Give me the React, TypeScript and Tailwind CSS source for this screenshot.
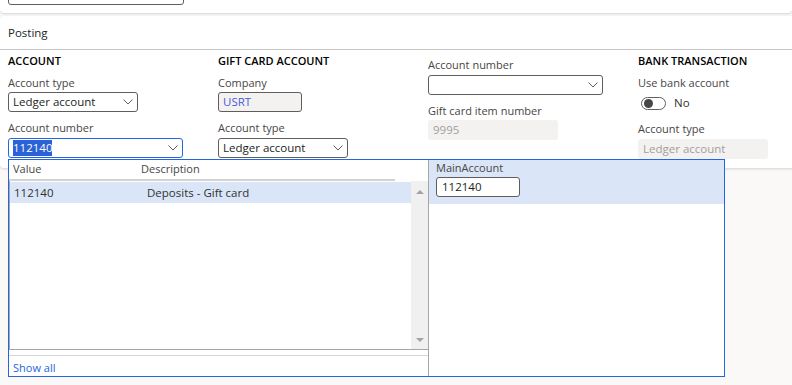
import React from "react";

const F = { fontFamily: '"Segoe UI", "Open Sans", "Noto Sans", sans-serif' };

function Chevron() {
  return (
    <svg width="10" height="6" viewBox="0 0 10 6" className="shrink-0">
      <path d="M0.5 0.5 L5 5 L9.5 0.5" fill="none" stroke="#605e5c" strokeWidth="1" />
    </svg>
  );
}

function Select({ w, children, focus }: { w: string; children?: React.ReactNode; focus?: boolean }) {
  return (
    <div
      className={`${w} h-[20px] rounded-[3px] border ${focus ? "border-[#2266e3]" : "border-[#605e5c]"} bg-white flex items-center pl-[4px] pr-[4px] text-[11.5px] text-[#201f1e]`}
    >
      <div className="flex-1 leading-[16px] truncate">{children}</div>
      <Chevron />
    </div>
  );
}

function Label({ children, className = "" }: { children: React.ReactNode; className?: string }) {
  return <div className={`text-[11px] leading-[16px] text-[#484644] ${className}`}>{children}</div>;
}

function Heading({ children }: { children: React.ReactNode }) {
  return <div className="text-[11px] leading-[16px] font-semibold text-[#000] mt-[3px]">{children}</div>;
}

export default function App() {
  return (
    <div style={F} className="relative w-[792px] h-[385px] overflow-hidden bg-[#faf9f8]">
      {/* top card */}
      <div className="h-[13px] bg-white rounded-b-[4px] shadow-[0_1px_2px_rgba(0,0,0,0.14)] overflow-hidden">
        <div className="ml-[8px] mt-[-15px] w-[176px] h-[20px] rounded-[3px] border border-[#605e5c]" />
      </div>

      {/* posting card */}
      <div className="mt-[3px] w-[810px] h-[152px] bg-white rounded-[4px] shadow-[0_1px_3px_rgba(0,0,0,0.16)]">
        <div className="h-[34px] flex items-center px-[8px] text-[11.5px] text-[#201f1e] border-b border-[#c8c6c4]">
          Posting
        </div>
        <div className="grid grid-cols-[210px_210px_210px_1fr] pl-[8px]">
          {/* col 1 */}
          <div>
            <Heading>ACCOUNT</Heading>
            <Label className="mt-[6px]">Account type</Label>
            <div className="mt-[1px]">
              <Select w="w-[130px]">Ledger account</Select>
            </div>
            <Label className="mt-[8px]">Account number</Label>
            <div className="mt-[2px]">
              <Select w="w-[175px]" focus>
                <span className="bg-[#2b62d8] text-white py-[1px]">112140</span>
              </Select>
            </div>
          </div>
          {/* col 2 */}
          <div>
            <Heading>GIFT CARD ACCOUNT</Heading>
            <Label className="mt-[6px]">Company</Label>
            <div className="mt-[1px] w-[84px] h-[20px] rounded-[3px] border border-[#605e5c] bg-[#f3f2f1] flex items-center pl-[4px] text-[11.5px] text-[#4a5ad8]">
              USRT
            </div>
            <Label className="mt-[8px]">Account type</Label>
            <div className="mt-[2px]">
              <Select w="w-[130px]">Ledger account</Select>
            </div>
          </div>
          {/* col 3 */}
          <div>
            <Label className="mt-[7px]">Account number</Label>
            <div className="mt-[2px]">
              <Select w="w-[175px]" />
            </div>
            <Label className="mt-[8px]">Gift card item number</Label>
            <div className="mt-[1px] w-[130px] h-[20px] rounded-[3px] bg-[#f3f2f1] flex items-center pl-[5px] text-[11.5px] text-[#a19f9d]">
              9995
            </div>
          </div>
          {/* col 4 */}
          <div>
            <Heading>BANK TRANSACTION</Heading>
            <Label className="mt-[6px]">Use bank account</Label>
            <div className="mt-[4px] h-[16px] flex items-center">
              <div className="ml-[3px] w-[25px] h-[13px] rounded-full border border-[#605e5c] flex items-center pl-[2px]">
                <div className="w-[9px] h-[9px] rounded-full bg-[#484644]" />
              </div>
              <span className="ml-[8px] text-[11.5px] text-[#323130]">No</span>
            </div>
            <Label className="mt-[10px]">Account type</Label>
            <div className="mt-[2px] w-[130px] h-[20px] rounded-[3px] bg-[#f3f2f1] flex items-center pl-[5px] text-[11.5px] text-[#a19f9d]">
              Ledger account
            </div>
          </div>
        </div>
      </div>

      {/* lookup dropdown */}
      <div className="absolute left-[8px] top-[159px] w-[717px] h-[218px] border border-[#2266e3] bg-white flex text-[11px]">
        <div className="w-[420px] border-r border-[#a6a6a6] flex flex-col">
          <div className="w-[386px] h-[21px] border-b-2 border-[#d2d2d2] flex items-center text-[#484644]">
            <span className="ml-[4px] w-[128px]">Value</span>
            <span>Description</span>
          </div>
          <div className="h-[170px] border-l border-b border-[#a6a6a6] flex">
            <div className="flex-1 pt-[1px]">
              <div className="h-[21px] bg-[#dae6f8] flex items-center text-[11.5px] text-[#323130]">
                <span className="ml-[4px] w-[133px]">112140</span>
                <span>Deposits - Gift card</span>
              </div>
            </div>
            <div className="w-[17px] bg-[#f0f0f0] flex flex-col items-center justify-between pt-[9px] pb-[7px]">
              <svg width="8" height="4" viewBox="0 0 8 4">
                <path d="M0 4 L4 0 L8 4 Z" fill="#a3a3a3" />
              </svg>
              <svg width="8" height="4" viewBox="0 0 8 4">
                <path d="M0 0 L8 0 L4 4 Z" fill="#a3a3a3" />
              </svg>
            </div>
          </div>
          <div className="mt-[5px] border-t border-[#d6d6d6] pt-[4px] pl-[4px] leading-[16px] text-[#2266e3]">
            Show all
          </div>
        </div>
        <div className="flex-1">
          <div className="h-[44px] bg-[#dae6f8] pl-[7px]">
            <div className="leading-[16px] text-[#484644]">MainAccount</div>
            <div className="mt-[1px] w-[84px] h-[20px] rounded-[3px] border border-[#605e5c] bg-white flex items-center pl-[5px] text-[11.5px] text-[#201f1e]">
              112140
            </div>
          </div>
        </div>
      </div>
    </div>
  );
}
